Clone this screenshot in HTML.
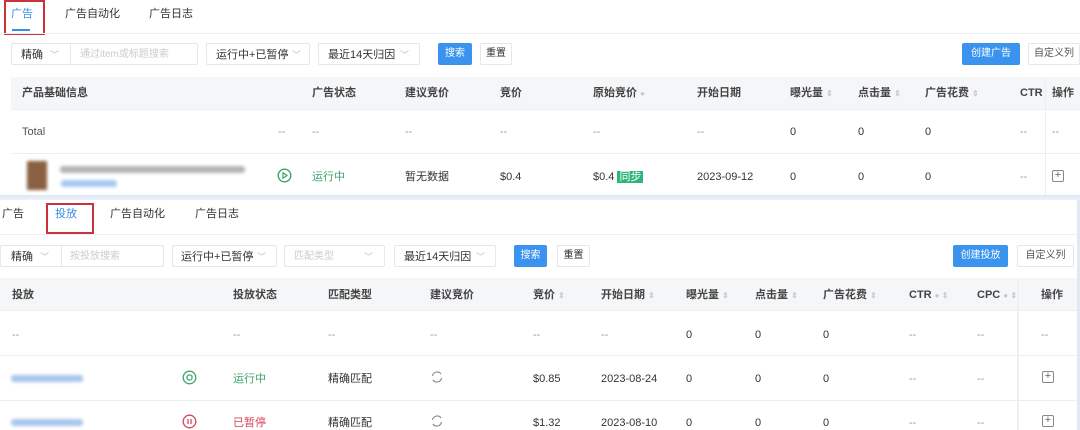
<!DOCTYPE html>
<html><head><meta charset="utf-8"><style>
*{margin:0;padding:0;box-sizing:border-box}
body{width:1080px;height:430px;overflow:hidden;background:#fff;font-family:"Liberation Sans","Noto Sans CJK SC",sans-serif;font-size:11px;color:#333;position:relative}
.a{position:absolute;white-space:nowrap;line-height:14px}
.box{position:absolute;border:1px solid #e4e7ec;border-radius:2px;background:#fff}
.g{color:#999}.gr{color:#3fa36a}.rd{color:#d4455a}.bl{color:#3a8ee6}
.hd{position:absolute;background:#f5f6f8;border-bottom:1px solid #eceef1}
.ln{position:absolute;height:1px;background:#eceef1}
.btn{position:absolute;background:#3a93ee;color:#fff;border-radius:2px;text-align:center;height:22px;line-height:22px;font-size:10px}
.wb{position:absolute;border:1px solid #e4e7ec;border-radius:2px;text-align:center;line-height:20px;font-size:10px;background:#fff}
.chev{position:absolute;color:#bbb;font-size:9px}
.red{position:absolute;border:2px solid #c9343c}
.blur{position:absolute;height:7px;border-radius:3px;filter:blur(1.5px)}
.b{font-weight:bold;color:#444}
.sort{color:#c8c8c8;font-size:8px}
.plus{position:absolute;width:12px;height:12px;border:1px solid #888;border-radius:2px;font-size:11px;line-height:9px;text-align:center;color:#666}
</style></head><body>
<div class="a bl" style="left:11px;top:7px">广告</div>
<div style="position:absolute;left:12px;top:29px;width:18px;height:2px;background:#3a8ee6"></div>
<div class="red" style="left:4px;top:0;width:41px;height:35px"></div>
<div class="a" style="left:65px;top:7px">广告自动化</div>
<div class="a" style="left:149px;top:7px">广告日志</div>
<div class="ln" style="left:0;top:33px;width:1080px"></div>

<div class="box" style="left:11px;top:43px;width:187px;height:22px"></div>
<div style="position:absolute;left:70px;top:43px;width:1px;height:22px;background:#e4e7ec"></div>
<div class="a" style="left:21px;top:48px">精确</div><div class="chev a" style="left:50px;top:48px">﹀</div>
<div class="a" style="left:80px;top:48px;color:#ccc;font-size:10px">通过item或标题搜索</div>
<div class="box" style="left:206px;top:43px;width:104px;height:22px"></div>
<div class="a" style="left:216px;top:48px">运行中+已暂停</div><div class="chev a" style="left:292px;top:48px">﹀</div>
<div class="box" style="left:318px;top:43px;width:102px;height:22px"></div>
<div class="a" style="left:328px;top:48px">最近14天归因</div><div class="chev a" style="left:400px;top:48px">﹀</div>
<div class="btn" style="left:438px;top:43px;width:34px">搜索</div>
<div class="wb" style="left:480px;top:43px;width:32px;height:22px">重置</div>
<div class="btn" style="left:962px;top:43px;width:58px">创建广告</div>
<div class="wb" style="left:1028px;top:43px;width:52px;height:22px;color:#555">自定义列</div>

<div class="hd" style="left:11px;top:77px;width:1069px;height:33px"></div>
<div class="a b" style="left:22px;top:86px">产品基础信息</div>
<div class="a b" style="left:312px;top:86px">广告状态</div>
<div class="a b" style="left:405px;top:86px">建议竞价</div>
<div class="a b" style="left:500px;top:86px">竞价</div>
<div class="a b" style="left:593px;top:86px">原始竞价 <span class="sort">●</span></div>
<div class="a b" style="left:697px;top:86px">开始日期</div>
<div class="a b" style="left:790px;top:86px">曝光量 <span class="sort">⇕</span></div>
<div class="a b" style="left:858px;top:86px">点击量 <span class="sort">⇕</span></div>
<div class="a b" style="left:925px;top:86px">广告花费 <span class="sort">⇕</span></div>
<div class="a b" style="left:1020px;top:86px">CTR</div>
<div class="a b" style="left:1052px;top:86px">操作</div>
<div style="position:absolute;left:1045px;top:77px;width:1px;height:120px;background:#eceef1"></div>

<div class="a" style="left:22px;top:125px;color:#555">Total</div>
<div class="a g" style="left:278px;top:125px">--</div>
<div class="a g" style="left:312px;top:125px">--</div>
<div class="a g" style="left:405px;top:125px">--</div>
<div class="a g" style="left:500px;top:125px">--</div>
<div class="a g" style="left:593px;top:125px">--</div>
<div class="a g" style="left:697px;top:125px">--</div>
<div class="a" style="left:790px;top:125px">0</div>
<div class="a" style="left:858px;top:125px">0</div>
<div class="a" style="left:925px;top:125px">0</div>
<div class="a g" style="left:1020px;top:125px">--</div>
<div class="a g" style="left:1052px;top:125px">--</div>
<div class="ln" style="left:11px;top:153px;width:1069px"></div>

<div style="position:absolute;left:27px;top:161px;width:20px;height:29px;background:#8a6040;filter:blur(1.5px)"></div>
<div class="blur" style="left:60px;top:166px;width:185px;background:#b4b4b4"></div>
<div class="blur" style="left:61px;top:180px;width:56px;background:#a8c8f2"></div>
<svg style="position:absolute;left:277px;top:168px" width="15" height="15" viewBox="0 0 15 15"><circle cx="7.5" cy="7.5" r="6.3" fill="none" stroke="#3fa36a" stroke-width="1.4"/><path d="M6 4.8L10 7.5L6 10.2Z" fill="none" stroke="#3fa36a" stroke-width="1.2"/></svg>
<div class="a gr" style="left:312px;top:170px">运行中</div>
<div class="a" style="left:405px;top:170px">暂无数据</div>
<div class="a" style="left:500px;top:170px">$0.4</div>
<div class="a" style="left:593px;top:170px">$0.4 <span style="background:#2fb57a;color:#fff;padding:0 2px">同步</span></div>
<div class="a" style="left:697px;top:170px">2023-09-12</div>
<div class="a" style="left:790px;top:170px">0</div>
<div class="a" style="left:858px;top:170px">0</div>
<div class="a" style="left:925px;top:170px">0</div>
<div class="a g" style="left:1020px;top:170px">--</div>
<div class="plus" style="left:1052px;top:170px">+</div>

<div style="position:absolute;left:0;top:195px;width:1080px;height:5px;background:linear-gradient(#dde6f4,#eef3fa)"></div>
<div style="position:absolute;left:1077px;top:200px;width:3px;height:230px;background:#e3e9f2"></div>

<div class="a" style="left:2px;top:207px">广告</div>
<div class="a bl" style="left:55px;top:207px">投放</div>
<div class="red" style="left:46px;top:203px;width:48px;height:31px"></div>
<div class="a" style="left:110px;top:207px">广告自动化</div>
<div class="a" style="left:195px;top:207px">广告日志</div>
<div class="ln" style="left:0;top:234px;width:1077px"></div>

<div class="box" style="left:0;top:245px;width:164px;height:22px"></div>
<div style="position:absolute;left:61px;top:245px;width:1px;height:22px;background:#e4e7ec"></div>
<div class="a" style="left:11px;top:250px">精确</div><div class="chev a" style="left:40px;top:250px">﹀</div>
<div class="a" style="left:70px;top:250px;color:#ccc;font-size:10px">按投放搜索</div>
<div class="box" style="left:172px;top:245px;width:105px;height:22px"></div>
<div class="a" style="left:181px;top:250px">运行中+已暂停</div><div class="chev a" style="left:257px;top:250px">﹀</div>
<div class="box" style="left:284px;top:245px;width:101px;height:22px"></div>
<div class="a" style="left:294px;top:250px;color:#ccc;font-size:10px">匹配类型</div><div class="chev a" style="left:364px;top:250px">﹀</div>
<div class="box" style="left:394px;top:245px;width:102px;height:22px"></div>
<div class="a" style="left:404px;top:250px">最近14天归因</div><div class="chev a" style="left:476px;top:250px">﹀</div>
<div class="btn" style="left:514px;top:245px;width:33px">搜索</div>
<div class="wb" style="left:557px;top:245px;width:33px;height:22px">重置</div>
<div class="btn" style="left:953px;top:245px;width:55px">创建投放</div>
<div class="wb" style="left:1017px;top:245px;width:57px;height:22px;color:#555">自定义列</div>

<div class="hd" style="left:0;top:278px;width:1077px;height:33px"></div>
<div class="a b" style="left:12px;top:288px">投放</div>
<div class="a b" style="left:233px;top:288px">投放状态</div>
<div class="a b" style="left:328px;top:288px">匹配类型</div>
<div class="a b" style="left:430px;top:288px">建议竞价</div>
<div class="a b" style="left:533px;top:288px">竞价 <span class="sort">⇕</span></div>
<div class="a b" style="left:601px;top:288px">开始日期 <span class="sort">⇕</span></div>
<div class="a b" style="left:686px;top:288px">曝光量 <span class="sort">⇕</span></div>
<div class="a b" style="left:755px;top:288px">点击量 <span class="sort">⇕</span></div>
<div class="a b" style="left:823px;top:288px">广告花费 <span class="sort">⇕</span></div>
<div class="a b" style="left:909px;top:288px">CTR <span class="sort">● ⇕</span></div>
<div class="a b" style="left:977px;top:288px">CPC <span class="sort">● ⇕</span></div>
<div class="a b" style="left:1041px;top:288px">操作</div>
<div style="position:absolute;left:1017px;top:278px;width:2px;height:152px;background:#eef0f3"></div>

<div class="a g" style="left:12px;top:328px">--</div>
<div class="a g" style="left:233px;top:328px">--</div>
<div class="a g" style="left:328px;top:328px">--</div>
<div class="a g" style="left:430px;top:328px">--</div>
<div class="a g" style="left:533px;top:328px">--</div>
<div class="a g" style="left:601px;top:328px">--</div>
<div class="a" style="left:686px;top:328px">0</div>
<div class="a" style="left:755px;top:328px">0</div>
<div class="a" style="left:823px;top:328px">0</div>
<div class="a g" style="left:909px;top:328px">--</div>
<div class="a g" style="left:977px;top:328px">--</div>
<div class="a g" style="left:1041px;top:328px">--</div>
<div class="ln" style="left:0;top:355px;width:1077px"></div>

<div class="blur" style="left:11px;top:375px;width:72px;background:#a8c6ee"></div>
<svg style="position:absolute;left:182px;top:370px" width="15" height="15" viewBox="0 0 15 15"><circle cx="7.5" cy="7.5" r="6.3" fill="none" stroke="#3fa36a" stroke-width="1.3"/><circle cx="7.5" cy="7.5" r="2.6" fill="none" stroke="#3fa36a" stroke-width="1.3"/></svg>
<div class="a gr" style="left:233px;top:372px">运行中</div>
<div class="a" style="left:328px;top:372px">精确匹配</div>
<svg style="position:absolute;left:430px;top:370px" width="14" height="14" viewBox="0 0 14 14"><path d="M2.5 6A4.7 4.7 0 0 1 11 4M11.5 8A4.7 4.7 0 0 1 3 10" fill="none" stroke="#888" stroke-width="1.1"/></svg>
<div class="a" style="left:533px;top:372px">$0.85</div>
<div class="a" style="left:601px;top:372px">2023-08-24</div>
<div class="a" style="left:686px;top:372px">0</div>
<div class="a" style="left:755px;top:372px">0</div>
<div class="a" style="left:823px;top:372px">0</div>
<div class="a g" style="left:909px;top:372px">--</div>
<div class="a g" style="left:977px;top:372px">--</div>
<div class="plus" style="left:1042px;top:371px">+</div>
<div class="ln" style="left:0;top:400px;width:1077px"></div>

<div class="blur" style="left:11px;top:419px;width:72px;background:#a8c6ee"></div>
<svg style="position:absolute;left:182px;top:414px" width="15" height="15" viewBox="0 0 15 15"><circle cx="7.5" cy="7.5" r="6.3" fill="none" stroke="#d4455a" stroke-width="1.3"/><path d="M6 5V10M9 5V10" stroke="#d4455a" stroke-width="1.3"/></svg>
<div class="a rd" style="left:233px;top:416px">已暂停</div>
<div class="a" style="left:328px;top:416px">精确匹配</div>
<svg style="position:absolute;left:430px;top:414px" width="14" height="14" viewBox="0 0 14 14"><path d="M2.5 6A4.7 4.7 0 0 1 11 4M11.5 8A4.7 4.7 0 0 1 3 10" fill="none" stroke="#888" stroke-width="1.1"/></svg>
<div class="a" style="left:533px;top:416px">$1.32</div>
<div class="a" style="left:601px;top:416px">2023-08-10</div>
<div class="a" style="left:686px;top:416px">0</div>
<div class="a" style="left:755px;top:416px">0</div>
<div class="a" style="left:823px;top:416px">0</div>
<div class="a g" style="left:909px;top:416px">--</div>
<div class="a g" style="left:977px;top:416px">--</div>
<div class="plus" style="left:1042px;top:415px">+</div>
</body></html>
